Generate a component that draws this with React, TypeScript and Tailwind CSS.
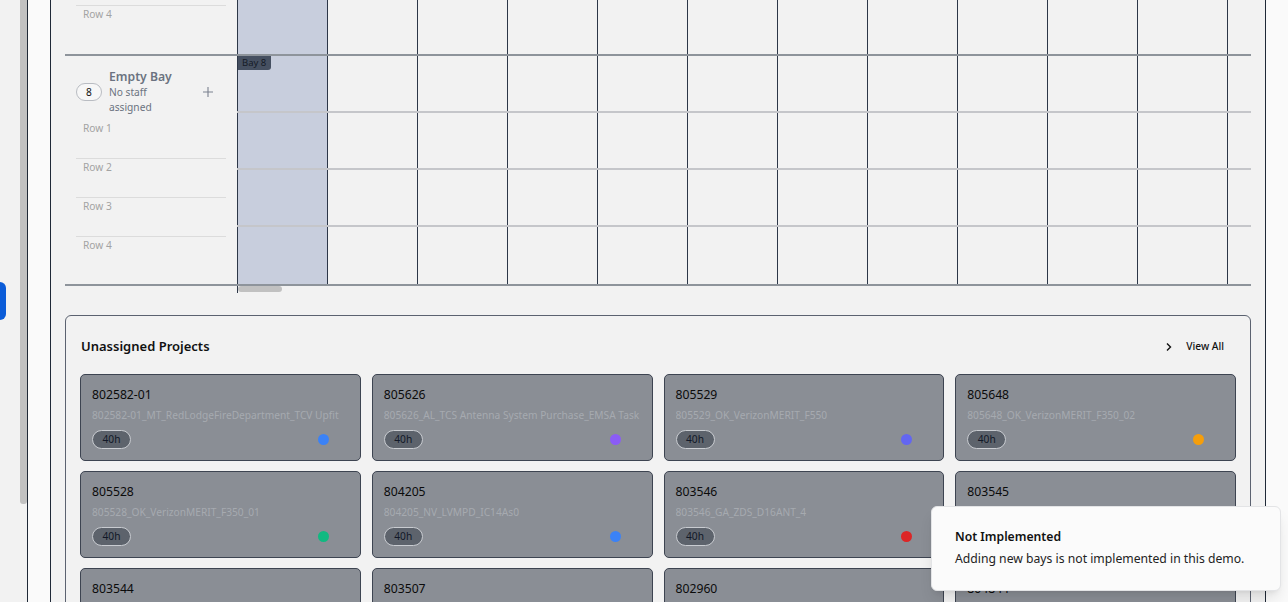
import React from "react";

const COLS = 12;

function GridRow({ h, border, tag }: { h: string; border: boolean; tag?: boolean }) {
  return (
    <div className={`flex ${h} ${border ? "border-b-2 border-[#c5c6ca]" : ""} box-border`}>
      {Array.from({ length: COLS }).map((_, i) => (
        <div
          key={i}
          className={`relative w-[90px] shrink-0 h-full border-l border-[#2d3748] ${i === 0 ? "bg-[#c8cedd]" : ""}`}
        >
          {tag && i === 0 && (
            <div className="absolute left-0 top-0 h-[14px] w-[33px] pl-[4px] bg-[#465061] rounded-br-[3px] text-[9.5px] leading-[14px] text-[#151b26]">
              Bay 8
            </div>
          )}
        </div>
      ))}
    </div>
  );
}

function RowLabel({ label, first, grow }: { label: string; first?: boolean; grow?: boolean }) {
  return (
    <div
      className={`border-t ${first ? "border-transparent" : "border-[#dcdcdc]"} ${grow ? "flex-1" : "h-[39px]"} pl-[7px] pt-[1px] text-[10.2px] leading-[14px] text-[#a3a3a3]`}
    >
      {label}
    </div>
  );
}

type Card = { id: string; sub: string; dot: string };

const cards: Card[] = [
  { id: "802582-01", sub: "802582-01_MT_RedLodgeFireDepartment_TCV Upfit", dot: "bg-[#3b82f6]" },
  { id: "805626", sub: "805626_AL_TCS Antenna System Purchase_EMSA Task", dot: "bg-[#8b5cf6]" },
  { id: "805529", sub: "805529_OK_VerizonMERIT_F550", dot: "bg-[#6366f1]" },
  { id: "805648", sub: "805648_OK_VerizonMERIT_F350_02", dot: "bg-[#f59e0b]" },
  { id: "805528", sub: "805528_OK_VerizonMERIT_F350_01", dot: "bg-[#10b981]" },
  { id: "804205", sub: "804205_NV_LVMPD_IC14As0", dot: "bg-[#3b82f6]" },
  { id: "803546", sub: "803546_GA_ZDS_D16ANT_4", dot: "bg-[#dc2626]" },
  { id: "803545", sub: "803545_GA_ZDS_D16ANT_3", dot: "bg-[#dc2626]" },
  { id: "803544", sub: "803544_GA_ZDS_D16ANT_2", dot: "bg-[#dc2626]" },
  { id: "803507", sub: "803507_TX_Upfit", dot: "bg-[#3b82f6]" },
  { id: "802960", sub: "802960_CA_Upfit", dot: "bg-[#10b981]" },
  { id: "804844", sub: "804844_FL_Upfit", dot: "bg-[#f59e0b]" },
];

function ProjectCard({ c }: { c: Card }) {
  return (
    <div className="h-[87px] min-w-0 box-border rounded-[5px] border border-[#3d4451] bg-[#8a8e95] px-[11px] pt-[11px]">
      <div className="text-[12.2px] leading-[18px] text-[#0b0b0b]">{c.id}</div>
      <div className="mt-[3px] text-[10.2px] leading-[16px] text-[#a6aab0] whitespace-nowrap overflow-hidden">{c.sub}</div>
      <div className="mt-[7px] flex items-center justify-between">
        <div className="h-[19px] w-[39px] box-border rounded-full border border-[#c9ccd1] bg-[#5d636c] text-[10.2px] leading-[17px] text-center text-[#111827]">
          40h
        </div>
        <div className={`w-[11px] h-[11px] rounded-full mr-[20px] ${c.dot}`} />
      </div>
    </div>
  );
}

export default function App() {
  return (
    <div className="relative w-[1288px] h-[602px] overflow-hidden flex bg-[#fafafa] font-['Noto_Sans',sans-serif]">
      {/* left sidebar strip */}
      <div className="w-[28px] shrink-0 bg-[#f2f2f2] border-r border-[#1f2937] flex">
        <div className="w-[20px] relative">
          <div className="absolute left-0 top-[282px] w-[6px] h-[38px] bg-[#0b5cd8] rounded-r-[6px]" />
        </div>
        <div className="w-[7px] h-[504px] bg-[#c1c1c1] rounded-b-[3px]" />
      </div>

      {/* main */}
      <div className="flex-1 min-w-0 px-[22px]">
        <div className="h-full min-w-0 border-x border-[#1f2937] bg-[#f2f2f2] pl-[14px] pr-[14px]">
          {/* partial previous bay */}
          <div className="flex border-b-2 border-[#8e949b]">
            <div className="w-[172px] shrink-0 px-[11px] h-[54px] flex flex-col pt-[5px]">
              <RowLabel label="Row 4" grow />
            </div>
            <div className="flex-1 min-w-0 overflow-hidden">
              <GridRow h="h-[54px]" border={false} />
            </div>
          </div>

          {/* bay 8 */}
          <div className="flex border-b-2 border-[#8e949b]">
            <div className="w-[172px] shrink-0 px-[11px] h-[228px] flex flex-col">
              <div className="pt-[13px] pb-[4px] flex items-center">
                <div className="w-[26px] h-[18px] box-border rounded-full border border-[#b9bcc2] bg-[#f7f7f7] text-[10.2px] leading-[16px] text-center text-[#111]">
                  8
                </div>
                <div className="ml-[7px] w-[66px]">
                  <div className="text-[12.2px] leading-[16px] font-semibold text-[#6b7280] whitespace-nowrap">Empty Bay</div>
                  <div className="text-[10.2px] leading-[15px] text-[#6b7280]">No staff assigned</div>
                </div>
                <div className="ml-auto mr-[12px] text-[#7b8190]">
                  <svg width="12" height="12" viewBox="0 0 12 12" fill="none" stroke="currentColor" strokeWidth="1.1">
                    <path d="M6 1v10M1 6h10" />
                  </svg>
                </div>
              </div>
              <RowLabel label="Row 1" first />
              <RowLabel label="Row 2" />
              <RowLabel label="Row 3" />
              <RowLabel label="Row 4" grow />
            </div>
            <div className="flex-1 min-w-0 overflow-hidden">
              <GridRow h="h-[57px]" border tag />
              <GridRow h="h-[57px]" border />
              <GridRow h="h-[57px]" border />
              <GridRow h="h-[57px]" border={false} />
            </div>
          </div>

          {/* horizontal scrollbar */}
          <div className="flex h-[7px]">
            <div className="w-[172px] shrink-0" />
            <div className="flex-1 min-w-0 border-l border-[#2d3748]">
              <div className="w-[44px] h-[6px] bg-[#c1c1c1] rounded-[3px]" />
            </div>
          </div>

          {/* unassigned projects */}
          <div className="mt-[22px] border border-[#5b6270] rounded-[6px] px-[14px] pt-[15px] pb-[20px]">
            <div className="h-[32px] flex items-center justify-between mb-[11px]">
              <div className="ml-[1px] text-[13px] font-semibold text-[#111]">Unassigned Projects</div>
              <div className="flex items-center gap-[12px] pr-[12px] text-[#111]">
                <svg width="10" height="10" viewBox="0 0 10 10" fill="none" stroke="currentColor" strokeWidth="1.4">
                  <path d="M3 1.5L6.5 5L3 8.5" />
                </svg>
                <span className="text-[10.2px] font-medium">View All</span>
              </div>
            </div>
            <div className="grid grid-cols-4 gap-x-[11px] gap-y-[10px]">
              {cards.map((c) => (
                <ProjectCard key={c.id} c={c} />
              ))}
            </div>
          </div>
        </div>
      </div>

      {/* toast */}
      <div className="absolute left-[931px] top-[506px] w-[350px] h-[85px] box-border rounded-[6px] border border-[#e3e4e6] bg-[#fbfbfb] shadow-lg pl-[23px] pt-[21px]">
        <div className="text-[12.2px] leading-[18px] font-semibold text-[#111]">Not Implemented</div>
        <div className="mt-[4px] text-[12.2px] leading-[18px] text-[#222]">Adding new bays is not implemented in this demo.</div>
      </div>
    </div>
  );
}
